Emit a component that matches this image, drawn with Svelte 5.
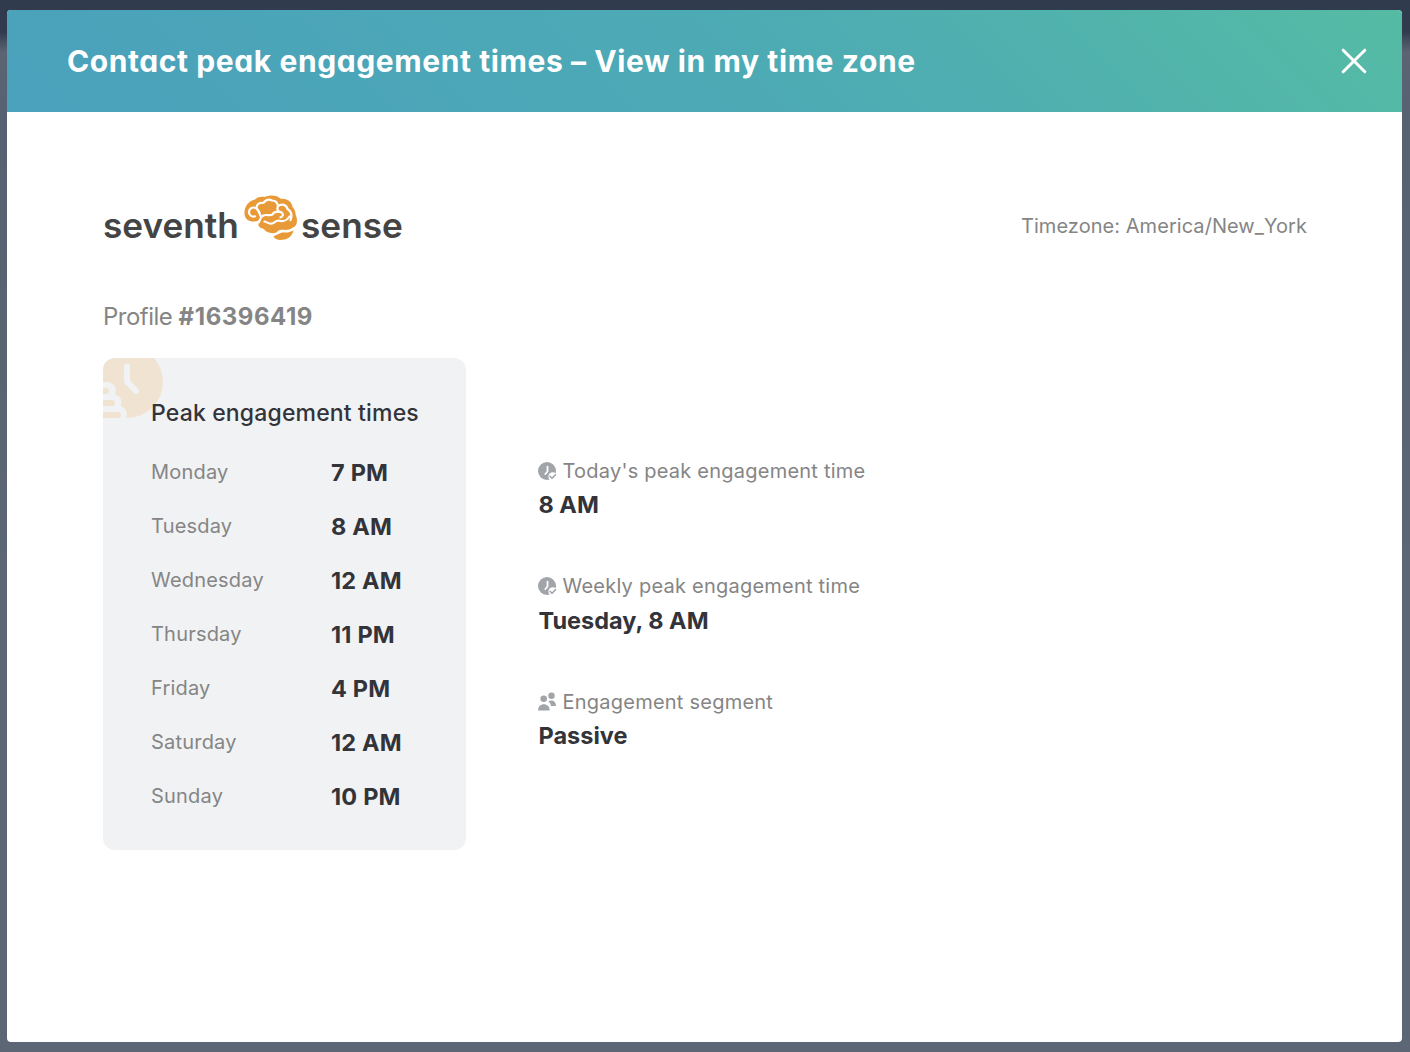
<script>
	const timezone = 'America/New_York';
	const profileId = '16396419';

	const days = [
		{ name: 'Monday', time: '7 PM' },
		{ name: 'Tuesday', time: '8 AM' },
		{ name: 'Wednesday', time: '12 AM' },
		{ name: 'Thursday', time: '11 PM' },
		{ name: 'Friday', time: '4 PM' },
		{ name: 'Saturday', time: '12 AM' },
		{ name: 'Sunday', time: '10 PM' }
	];

	const stats = [
		{ icon: 'clock', label: "Today's peak engagement time", value: '8 AM' },
		{ icon: 'clock', label: 'Weekly peak engagement time', value: 'Tuesday, 8 AM' },
		{ icon: 'people', label: 'Engagement segment', value: 'Passive' }
	];
</script>

<div class="backdrop">
	<div class="modal" role="dialog" aria-labelledby="modal-title">
		<header class="modal-header">
			<h1 id="modal-title">Contact peak engagement times – View in my time zone</h1>
			<button class="close" aria-label="Close">
				<svg width="26" height="26" viewBox="0 0 26 26">
					<path d="M2.2 2.2 23.8 23.8M23.8 2.2 2.2 23.8" />
				</svg>
			</button>
		</header>

		<main>
			<div class="top">
				<div class="logo">
					<span class="seventh">seventh</span>
					<svg class="brain" width="54" height="46" viewBox="0 0 54 46">
						<path
							class="fill"
							d="M.5 19C0 12 4 6 11 4.500C14 1 19 1.500 21 2C26-.5 33 0 37 4C43 3 48 7 48.500 12C52 15 51 19 52.500 22C54 28 52 32 48 33C43 37 38 33 34 36C31 40 22 38 20 34C15 33 13 30 15 25.500C8 28 1 26 .5 19Z"
						/>
						<path class="fill" d="M29.500 41C34 40 36 37 40 37.500C44 38 47 36.500 49.500 35.500C48 42 43 45 36 45C32 44.500 30 43.500 29.500 41Z" />
						<path
							class="fold"
							d="M11 21.300C7.500 22.500 4.500 19.500 5 16.500C5.500 13 9 11.500 12 13.300C15 15 15.500 18 16.500 21M12.500 13C12.500 9.500 15 7.500 19.500 7.800C22 4.500 25.500 4.200 28 5.500C31 5.500 33.500 7.500 34 11C38 8.500 42.500 9.500 43.500 14C47.500 16.500 48 21 46.500 25M34 11C32.500 14.500 34 17 37.500 17.300C39.800 19 39 21.500 36.500 22.300M14.500 27.500C16 26 15.500 23.500 18.500 21C22 18.500 25 21.500 28.500 19.500C29.500 17.500 32 16.500 34.500 17M20.500 26.500C23.500 27.200 24.500 29.200 28 28.500C31 28 31.500 25.500 34.500 25.500C38.500 27 43 25.500 45.500 21.500"
						/>
					</svg>
					<span class="sense">sense</span>
				</div>
				<p class="timezone">Timezone: {timezone}</p>
			</div>

			<p class="profile">Profile <strong>#{profileId}</strong></p>

			<div class="content">
				<section class="card">
					<svg class="card-art" width="60" height="60" viewBox="0 0 60 60">
						<circle class="face" cx="24" cy="24" r="36" />
						<path class="hands" d="M24 8.500V23.500L33 33" />
						<path
							class="cutout"
							d="M0 24H4C9 24 13 28 12.500 32V37C16 37 18.500 40 18 43.500V48.500C22 49 24.500 53 23.500 60H0Z"
						/>
						<path class="face" d="M0 30H3A3 3 0 0 1 3 36H0ZM0 42H9A3 3 0 0 1 9 48H0ZM0 54H15A3 3 0 0 1 15 60H0Z" />
					</svg>
					<h2>Peak engagement times</h2>
					<dl>
						{#each days as day}
							<div class="day">
								<dt>{day.name}</dt>
								<dd>{day.time}</dd>
							</div>
						{/each}
					</dl>
				</section>

				<section class="stats">
					{#each stats as stat}
						<div class="stat">
							<p class="label">
								{#if stat.icon === 'clock'}
									<svg width="19" height="19" viewBox="0 0 19 19">
										<circle class="gray" cx="9" cy="9" r="9" />
										<path class="tick" d="M9.500 4.700V9.500L7.300 12" />
										<circle class="badge" cx="14.700" cy="14.500" r="4.300" />
										<path class="check" d="M12 14.300 14 16.300 17.500 12.700" />
									</svg>
								{:else}
									<svg width="19" height="19" viewBox="0 0 19 19">
										<circle class="gray" cx="13.500" cy="3.800" r="3.200" />
										<path class="gray" d="M10.500 9.500C13 7.500 18 8.500 18 14H13C12.800 12 12 11 10.500 9.500Z" />
										<circle class="gray" cx="5.700" cy="6.800" r="3.300" />
										<path class="gray" d="M0 18.500C0 10 11.700 10 11.700 18.500Z" />
									</svg>
								{/if}
								<span>{stat.label}</span>
							</p>
							<p class="value">{stat.value}</p>
						</div>
					{/each}
				</section>
			</div>
		</main>
	</div>
</div>

<style>
	:global(body) {
		background: #5c6675;
	}

	h1,
	h2,
	p,
	dl,
	dd {
		margin: 0;
	}

	.backdrop {
		box-sizing: border-box;
		height: 1052px;
		padding: 10px 8px 10px 7px;
		background: linear-gradient(#303c4e 0, #303c4e 32px, #5c6473 52px, #566171 120px, #5c6675 600px);
		font-family: Inter, sans-serif;
		color: #33343a;
	}

	.modal {
		height: 1032px;
		border-radius: 4px;
		overflow: hidden;
		background: #fff;
	}

	.modal-header {
		display: flex;
		align-items: center;
		justify-content: space-between;
		box-sizing: border-box;
		height: 102px;
		padding: 0 35px 0 60px;
		background: linear-gradient(45deg, #4aa1bc, #4dabb4 56%, #55bba4);
	}

	h1 {
		font-size: 30px;
		font-weight: 650;
		line-height: 40px;
		letter-spacing: 0.59px;
		white-space: nowrap;
		font-feature-settings: 'cv11';
		color: #fff;
	}

	.close {
		display: flex;
		padding: 0;
		border: 0;
		background: none;
	}

	.close path {
		fill: none;
		stroke: #fff;
		stroke-width: 3;
		stroke-linecap: round;
	}

	main {
		padding: 80px 95px 0 96px;
	}

	.top {
		display: flex;
		justify-content: space-between;
		height: 68px;
	}

	.logo {
		display: flex;
		font-size: 35.2px;
		font-weight: 600;
		line-height: 67px;
		color: #444;
	}

	.seventh {
		width: 140px;
	}

	.brain {
		margin: 3px 3px 0 1px;
	}

	.brain .fill {
		fill: #e99a38;
	}

	.brain .fold {
		fill: none;
		stroke: #fff;
		stroke-width: 2.2;
		stroke-linecap: round;
		stroke-linejoin: round;
	}

	.timezone {
		font-size: 20px;
		line-height: 68px;
		letter-spacing: 0.05px;
		color: #858585;
	}

	.profile {
		margin-top: 41px;
		font-size: 24px;
		line-height: 32px;
		letter-spacing: -0.5px;
		color: #858585;
	}

	.profile strong {
		font-weight: 650;
		letter-spacing: 0.55px;
	}

	.content {
		display: flex;
		gap: 72px;
		margin-top: 25px;
	}

	.card {
		position: relative;
		box-sizing: border-box;
		width: 363px;
		height: 492px;
		padding: 39px 48px 0;
		border-radius: 12px;
		overflow: hidden;
		background: #f1f2f4;
	}

	.card-art {
		position: absolute;
		top: 0;
		left: 0;
	}

	.face {
		fill: #f0e3d2;
	}

	.cutout {
		fill: #f1f2f4;
	}

	.hands {
		fill: none;
		stroke: #f1f2f4;
		stroke-width: 6;
		stroke-linecap: round;
		stroke-linejoin: round;
	}

	h2 {
		position: relative;
		font-size: 23px;
		font-weight: 450;
		line-height: 32px;
		letter-spacing: 0.16px;
		white-space: nowrap;
	}

	dl {
		margin-top: 16px;
	}

	.day {
		display: grid;
		grid-template-columns: 180px 1fr;
		align-items: center;
		height: 54px;
	}

	dt {
		font-size: 20px;
		line-height: 28px;
		letter-spacing: 0.2px;
		color: #858585;
	}

	dd {
		padding-top: 1px;
		font-size: 23.5px;
		font-weight: 650;
		line-height: 30px;
		letter-spacing: 0.2px;
	}

	.stats {
		padding-top: 98px;
	}

	.stat {
		height: 115.4px;
	}

	.label {
		display: flex;
		align-items: center;
		gap: 5.5px;
		height: 30px;
		font-size: 20px;
		letter-spacing: 0.23px;
		color: #858585;
	}

	.gray {
		fill: #a1a4a9;
	}

	.badge {
		fill: #fff;
	}

	.tick,
	.check {
		fill: none;
		stroke: #fff;
		stroke-width: 1.8;
		stroke-linecap: round;
		stroke-linejoin: round;
	}

	.check {
		stroke: #a1a4a9;
		stroke-width: 1.6;
	}

	.value {
		margin-top: 4.2px;
		padding-left: 0.5px;
		font-size: 23.5px;
		font-weight: 650;
		line-height: 30px;
	}
</style>
